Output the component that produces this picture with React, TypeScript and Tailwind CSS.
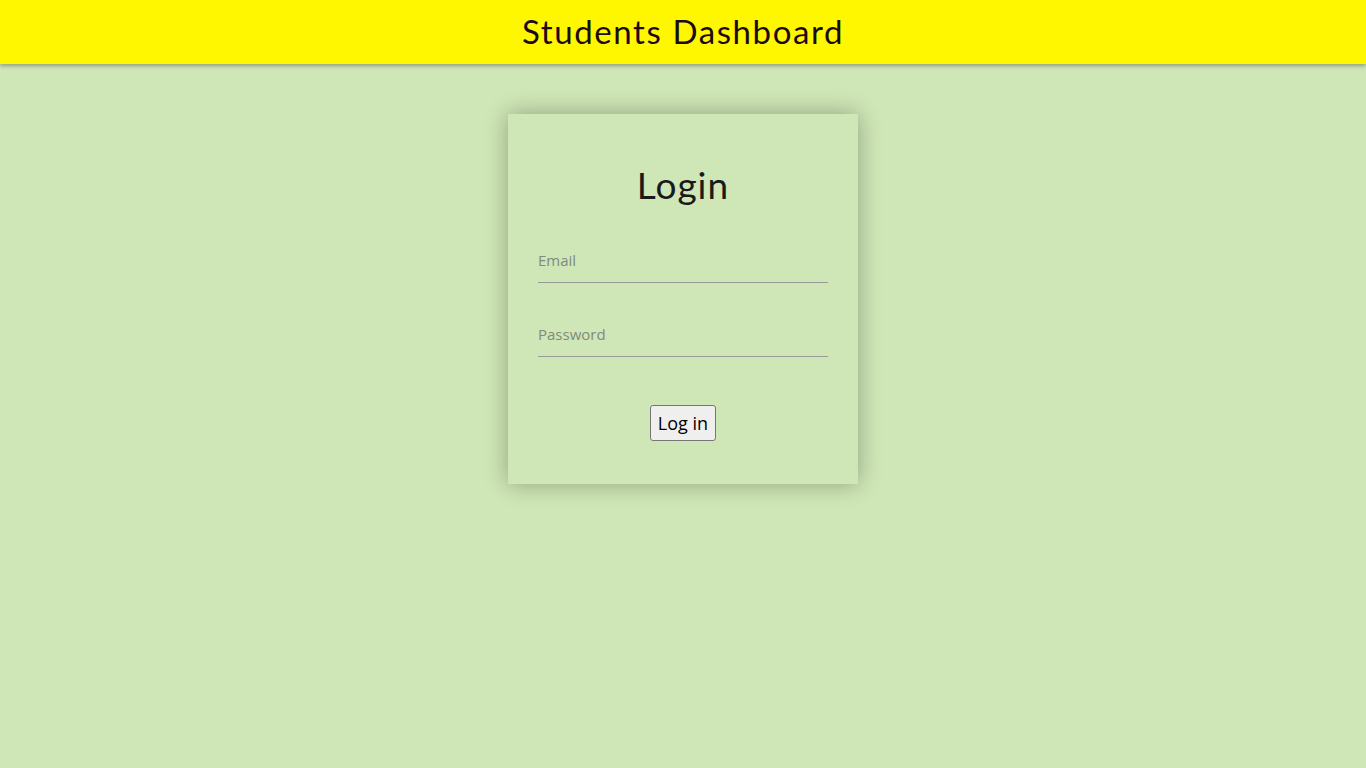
export default function App() {
  return (
    <div className="min-h-screen bg-[#cfe6b6] font-['Open_Sans',sans-serif]">
      <header className="h-16 bg-[#fff700] shadow-[0_2px_4px_rgba(0,0,0,0.3)] flex items-center justify-center">
        <h1 className="text-[33px] text-[#1c0b16] font-['Lato',sans-serif] tracking-[1.6px]">Students Dashboard</h1>
      </header>
      <main className="flex justify-center pt-[50px]">
        <form
          className="w-[350px] bg-[#cfe6b6] shadow-[0_0_22px_rgba(0,0,0,0.3)] px-[30px] pt-[44px] pb-[43px] flex flex-col"
          onSubmit={(e) => e.preventDefault()}
        >
          <h2 className="text-center text-[37px] leading-[54px] text-[#1a1a1a] font-['Lato',sans-serif] tracking-[1px]">Login</h2>
          <input
            type="email"
            placeholder="Email"
            className="mt-[39px] h-[32px] pb-[14px] bg-transparent border-b border-[#999] outline-none text-[15px] placeholder:text-[#7f8b7f]"
          />
          <input
            type="password"
            placeholder="Password"
            className="mt-[42px] h-[32px] pb-[14px] bg-transparent border-b border-[#999] outline-none text-[15px] placeholder:text-[#7f8b7f]"
          />
          <div className="flex justify-center mt-[48px]">
            <button
              type="submit"
              className="h-9 px-[7px] bg-[#efefef] border border-[#767676] rounded-[3px] text-[18px] text-black"
            >
              Log in
            </button>
          </div>
        </form>
      </main>
    </div>
  );
}
